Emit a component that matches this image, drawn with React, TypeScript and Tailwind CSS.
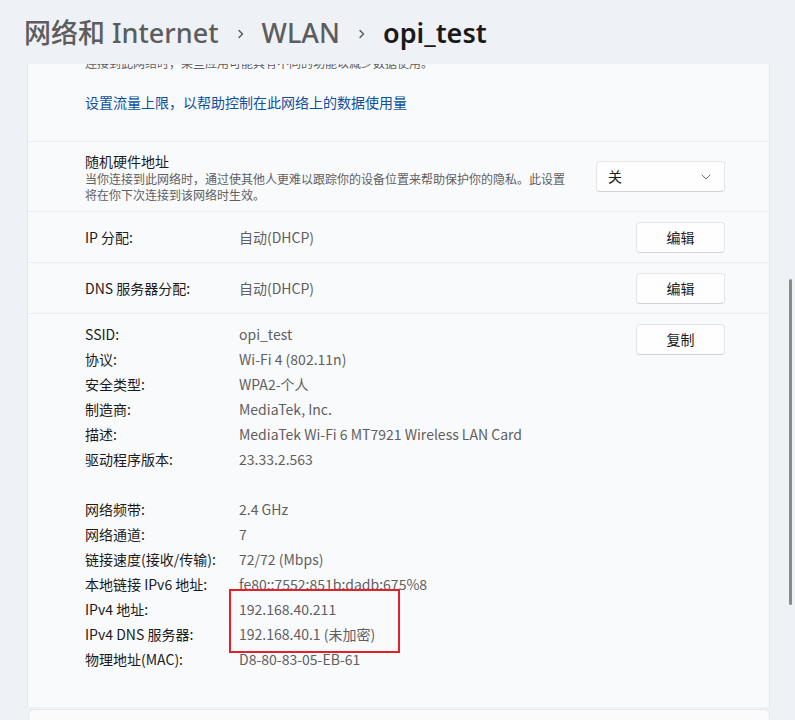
import React from "react";

const FONT = { fontFamily: '"Noto Sans CJK SC", "Noto Sans", sans-serif' };
const HFONT = { fontFamily: '"Noto Sans", "Noto Sans CJK SC", sans-serif' };

function Chevron() {
  return (
    <svg width="10" height="14" viewBox="0 0 10 14" className="ml-[17px] mr-[16px]">
      <path d="M3 3.5 L6.5 7 L3 10.5" fill="none" stroke="#5c5c5c" strokeWidth="1.5" strokeLinecap="round" strokeLinejoin="round" />
    </svg>
  );
}

function Btn({ children }: { children: React.ReactNode }) {
  return (
    <div className="w-[89px] h-[31px] flex items-center justify-center rounded-[4px] bg-[#fefefe] border border-[#e3e5e8] border-b-[#d2d4d8] text-[14px] text-[#1b1b1b]">
      {children}
    </div>
  );
}

const details1: [string, string][] = [
  ["SSID:", "opi_test"],
  ["协议:", "Wi-Fi 4 (802.11n)"],
  ["安全类型:", "WPA2-个人"],
  ["制造商:", "MediaTek, Inc."],
  ["描述:", "MediaTek Wi-Fi 6 MT7921 Wireless LAN Card"],
  ["驱动程序版本:", "23.33.2.563"],
];
const details2: [string, string][] = [
  ["网络频带:", "2.4 GHz"],
  ["网络通道:", "7"],
  ["链接速度(接收/传输):", "72/72 (Mbps)"],
  ["本地链接 IPv6 地址:", "fe80::7552:851b:dadb:675%8"],
  ["IPv4 地址:", "192.168.40.211"],
  ["IPv4 DNS 服务器:", "192.168.40.1 (未加密)"],
  ["物理地址(MAC):", "D8-80-83-05-EB-61"],
];

function DRow({ k, v }: { k: string; v: string }) {
  return (
    <div className="flex h-[25px] items-center text-[14px]">
      <div className="w-[154px] text-[#1b1b1b] whitespace-nowrap">{k}</div>
      <div className="text-[#5f5f5f] whitespace-nowrap">{v}</div>
    </div>
  );
}

export default function App() {
  return (
    <div className="w-[795px] h-[720px] bg-[#eef2f6] relative overflow-hidden" style={FONT}>
      <div className="h-[64px] flex items-center pl-[24px] pt-[3px] text-[27px] font-medium" style={HFONT}>
        <span className="text-[#5d5d5d]">网络和 Internet</span>
        <Chevron />
        <span className="text-[#5d5d5d]">WLAN</span>
        <Chevron />
        <span className="text-[#1a1a1a] font-semibold">opi_test</span>
      </div>

      <div className="pl-[27px] w-[770px]">
        <div className="bg-[#f9fafc] border-x border-[#e4e7eb] h-[643px] overflow-hidden">
          {/* section 1 */}
          <div className="h-[78px] border-b border-[#e9ecf0] pl-[57px] flex flex-col">
            <div className="mt-[-9px] h-[16px] leading-[16px] text-[12px] text-[#5f5f5f]">
              连接到此网络时，某些应用可能具有不同的功能以减少数据使用。
            </div>
            <div className="mt-[21px] h-[20px] leading-[20px] text-[14px] text-[#0f4fa0]">
              设置流量上限，以帮助控制在此网络上的数据使用量
            </div>
          </div>
          {/* section 2 */}
          <div className="h-[70px] border-b border-[#e9ecf0] pl-[57px] pr-[44px] flex items-center">
            <div className="flex-1 pt-[1px]">
              <div className="text-[14px] leading-[20px] text-[#1b1b1b]">随机硬件地址</div>
              <div className="text-[12px] leading-[16px] text-[#5f5f5f] w-[490px]">
                当你连接到此网络时，通过使其他人更难以跟踪你的设备位置来帮助保护你的隐私。此设置将在你下次连接到该网络时生效。
              </div>
            </div>
            <div className="w-[129px] h-[31px] flex items-center justify-between pl-[11px] pr-[13px] rounded-[4px] bg-[#fefefe] border border-[#e3e5e8] border-b-[#d2d4d8] text-[14px] text-[#1b1b1b]">
              <span>关</span>
              <svg width="10" height="6" viewBox="0 0 10 6">
                <path d="M1 1 L5 5 L9 1" fill="none" stroke="#6b6b6b" strokeWidth="1" strokeLinecap="round" />
              </svg>
            </div>
          </div>
          {/* IP */}
          <div className="h-[51px] border-b border-[#e9ecf0] pl-[57px] pr-[44px] flex items-center text-[14px]">
            <div className="w-[154px] text-[#1b1b1b]">IP 分配:</div>
            <div className="flex-1 text-[#5f5f5f]">自动(DHCP)</div>
            <Btn>编辑</Btn>
          </div>
          <div className="h-[51px] border-b border-[#e9ecf0] pl-[57px] pr-[44px] flex items-center text-[14px]">
            <div className="w-[154px] text-[#1b1b1b]">DNS 服务器分配:</div>
            <div className="flex-1 text-[#5f5f5f]">自动(DHCP)</div>
            <Btn>编辑</Btn>
          </div>
          {/* details */}
          <div className="pl-[57px] pr-[44px] pt-[8px] flex">
            <div className="flex-1 relative">
              {details1.map(([k, v]) => (
                <DRow key={k} k={k} v={v} />
              ))}
              <div className="h-[25px]" />
              {details2.map(([k, v]) => (
                <DRow key={k} k={k} v={v} />
              ))}
              <div className="absolute left-[144px] top-[267px] w-[171px] h-[64px] border-2 border-[#e3212b]" />
            </div>
            <div className="pt-[2px]">
              <Btn>复制</Btn>
            </div>
          </div>
        </div>
        <div className="mt-[2px] ml-[1px] h-[20px] bg-[#fbfbfc] border border-[#e4e7eb] rounded-t-[6px]" />
      </div>

      {/* scrollbar */}
      <div className="absolute left-[789px] top-[279px] w-[3px] h-[326px] rounded-full bg-[#8a8a8a]" />
    </div>
  );
}
